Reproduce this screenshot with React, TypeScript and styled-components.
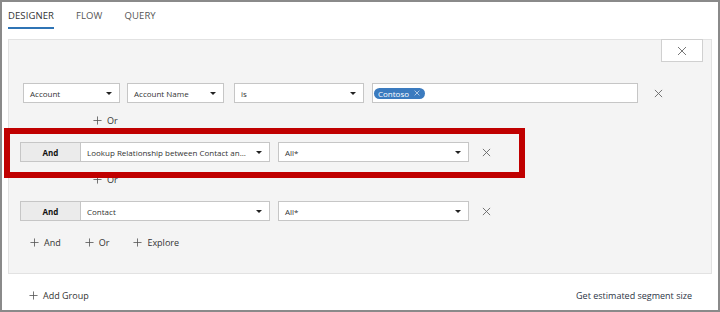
import React from "react";
import styled, { createGlobalStyle } from "styled-components";

const Global = createGlobalStyle`
  html, body { margin: 0; padding: 0; background: #fff; }
  body { font-family: "Open Sans", "Noto Sans", sans-serif; color: #333; }
  * { box-sizing: border-box; }
`;

const Frame = styled.div`
  position: relative;
  width: 720px;
  height: 312px;
  border: 2px solid #8a8a8a;
  display: flex;
  flex-direction: column;
  background: #fff;
`;

const TabBar = styled.div`
  display: flex;
  gap: 22px;
  padding: 0 0 0 6px;
  height: 37px;
`;

const Tab = styled.div<{ $active?: boolean }>`
  height: 27px;
  display: flex;
  align-items: center;
  padding-top: 1px;
  font-size: 9.5px;
  letter-spacing: 0.1px;
  color: ${(p) => (p.$active ? "#333" : "#555")};
  border-bottom: 2px solid ${(p) => (p.$active ? "#2f74b5" : "transparent")};
`;

const Panel = styled.div`
  margin: 0 6px;
  height: 235px;
  background: #f4f4f4;
  border: 1px solid #e2e2e2;
  display: flex;
  flex-direction: column;
`;

const TopBar = styled.div`
  display: flex;
  justify-content: flex-end;
  padding-right: 8px;
`;

const CloseButton = styled.div`
  width: 42px;
  height: 23px;
  margin-top: -1px;
  background: #fff;
  border: 1px solid #d0d0d0;
  display: flex;
  align-items: center;
  justify-content: center;
`;

const Row = styled.div<{ $indent: number; $top: number }>`
  display: flex;
  align-items: center;
  height: 20px;
  margin-top: ${(p) => p.$top}px;
  padding-left: ${(p) => p.$indent}px;
`;

const Select = styled.div<{ $w: number; $gap?: number }>`
  width: ${(p) => p.$w}px;
  height: 20px;
  margin-right: ${(p) => p.$gap ?? 0}px;
  background: #fff;
  border: 1px solid #c6c6c6;
  display: flex;
  align-items: center;
  justify-content: space-between;
  padding: 0 7px 0 6px;
  font-size: 8px;
  color: #333;
  white-space: nowrap;
  overflow: hidden;
`;

const Caret = styled.span`
  flex: none;
  width: 0;
  height: 0;
  border-left: 3px solid transparent;
  border-right: 3px solid transparent;
  border-top: 3px solid #222;
`;

const ValueBox = styled.div<{ $w: number; $gap: number }>`
  width: ${(p) => p.$w}px;
  height: 20px;
  margin-right: ${(p) => p.$gap}px;
  background: #fff;
  border: 1px solid #c6c6c6;
  display: flex;
  align-items: center;
  padding-left: 1px;
`;

const Chip = styled.span`
  display: inline-flex;
  align-items: center;
  gap: 5px;
  height: 11px;
  padding: 0 5px 0 4px;
  border-radius: 6px;
  background: #3b7bbf;
  color: #fff;
  font-size: 8px;
`;

const AndButton = styled.div`
  width: 60px;
  height: 20px;
  background: #ebebeb;
  border: 1px solid #c6c6c6;
  border-right: none;
  display: flex;
  align-items: center;
  justify-content: center;
  font-size: 8px;
  font-weight: 700;
  color: #111;
`;

const LinkRow = styled.div<{ $indent: number; $top: number; $gap?: number }>`
  display: flex;
  align-items: center;
  gap: ${(p) => p.$gap ?? 0}px;
  height: 14px;
  margin-top: ${(p) => p.$top}px;
  padding-left: ${(p) => p.$indent}px;
`;

const Link = styled.span<{ $tone?: string }>`
  display: inline-flex;
  align-items: center;
  gap: 5px;
  font-size: 9px;
  color: ${(p) => p.$tone ?? "#333"};
  white-space: nowrap;
`;

const Footer = styled.div`
  flex: 1;
  display: flex;
  align-items: center;
  justify-content: space-between;
  padding: 6px 26px 0 27px;
`;

const Highlight = styled.div`
  position: absolute;
  left: 2px;
  top: 126px;
  width: 521px;
  height: 50px;
  border: 6px solid #c00000;
  pointer-events: none;
`;

const XIcon = ({ size = 9, color = "#666" }: { size?: number; color?: string }) => (
  <svg width={size} height={size} viewBox="0 0 10 10" style={{ flex: "none" }}>
    <path d="M1 1L9 9M9 1L1 9" stroke={color} strokeWidth="1" fill="none" />
  </svg>
);

const PlusIcon = ({ size = 9 }: { size?: number }) => (
  <svg width={size} height={size} viewBox="0 0 10 10" style={{ flex: "none" }}>
    <path d="M5 0.5V9.5M0.5 5H9.5" stroke="#555" strokeWidth="0.9" fill="none" />
  </svg>
);

const RemoveSlot = styled.span<{ $left: number }>`
  margin-left: ${(p) => p.$left}px;
  display: flex;
  align-items: center;
`;

export default function App() {
  return (
    <>
      <Global />
      <Frame>
        <TabBar>
          <Tab $active>DESIGNER</Tab>
          <Tab>FLOW</Tab>
          <Tab>QUERY</Tab>
        </TabBar>
        <Panel>
          <TopBar>
            <CloseButton>
              <XIcon size={10} color="#777" />
            </CloseButton>
          </TopBar>

          <Row $indent={14} $top={21}>
            <Select $w={97} $gap={7}>
              Account <Caret />
            </Select>
            <Select $w={97} $gap={10}>
              Account Name <Caret />
            </Select>
            <Select $w={130} $gap={8}>
              is <Caret />
            </Select>
            <ValueBox $w={266} $gap={0}>
              <Chip>
                Contoso
                <XIcon size={6} color="#fff" />
              </Chip>
            </ValueBox>
            <RemoveSlot $left={16}>
              <XIcon />
            </RemoveSlot>
          </Row>

          <LinkRow $indent={84} $top={10}>
            <Link>
              <PlusIcon />
              Or
            </Link>
          </LinkRow>

          <Row $indent={11} $top={15}>
            <AndButton>And</AndButton>
            <Select $w={190} $gap={8}>
              Lookup Relationship between Contact an... <Caret />
            </Select>
            <Select $w={191}>
              All* <Caret />
            </Select>
            <RemoveSlot $left={13}>
              <XIcon />
            </RemoveSlot>
          </Row>

          <LinkRow $indent={84} $top={10}>
            <Link>
              <PlusIcon />
              Or
            </Link>
          </LinkRow>

          <Row $indent={11} $top={15}>
            <AndButton>And</AndButton>
            <Select $w={190} $gap={8}>
              Contact <Caret />
            </Select>
            <Select $w={191}>
              All* <Caret />
            </Select>
            <RemoveSlot $left={13}>
              <XIcon />
            </RemoveSlot>
          </Row>

          <LinkRow $indent={21} $top={14} $gap={24}>
            <Link>
              <PlusIcon />
              And
            </Link>
            <Link>
              <PlusIcon />
              Or
            </Link>
            <Link>
              <PlusIcon />
              Explore
            </Link>
          </LinkRow>
        </Panel>
        <Footer>
          <Link>
            <PlusIcon />
            Add Group
          </Link>
          <Link $tone="#2b3445">Get estimated segment size</Link>
        </Footer>
        <Highlight />
      </Frame>
    </>
  );
}
